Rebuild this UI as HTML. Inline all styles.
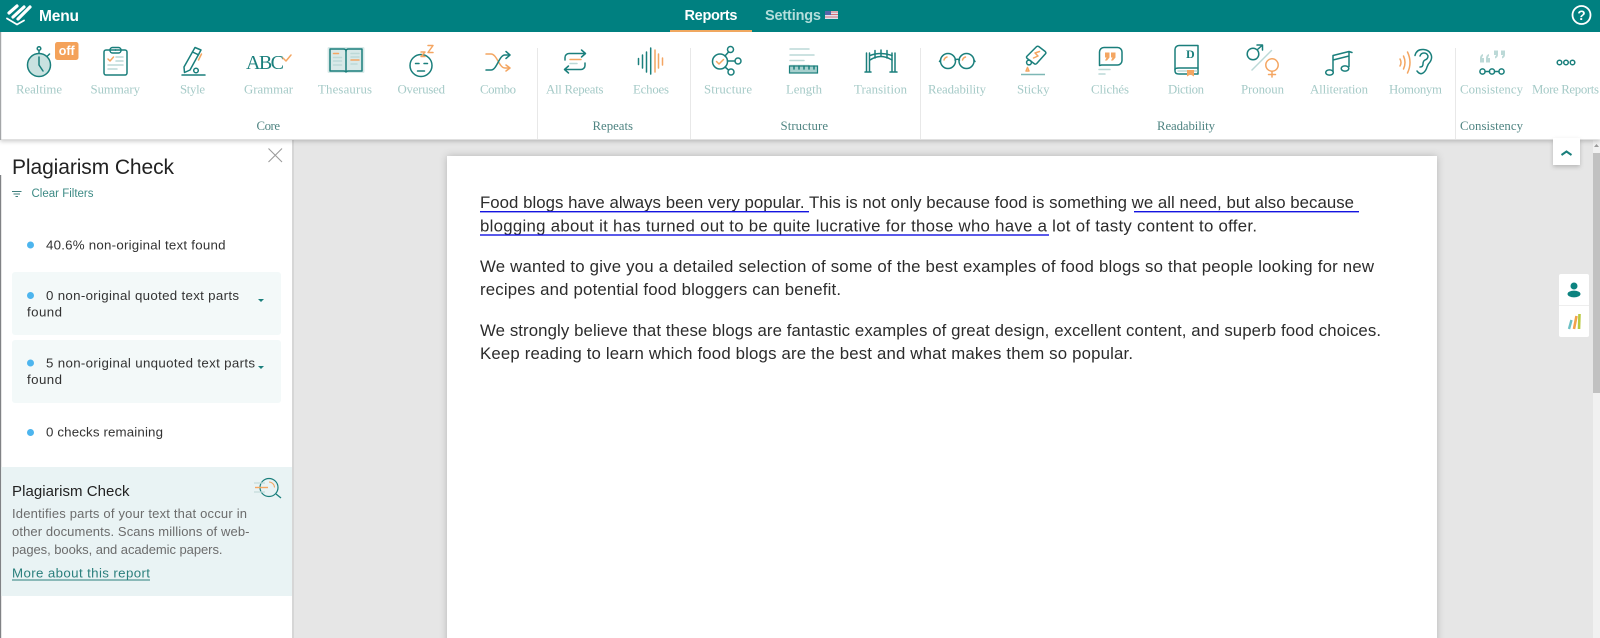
<!DOCTYPE html>
<html><head><meta charset="utf-8"><title>Plagiarism Check</title>
<style>
html,body{margin:0;padding:0;width:1600px;height:638px;overflow:hidden;background:#e6e6e6}
svg{display:block}
.s{font-family:"Liberation Sans",sans-serif}
.l{font-family:"Liberation Serif",serif;font-size:12.8px;fill:#a5cac7}
.g{font-family:"Liberation Serif",serif;font-size:12.8px;fill:#4f8482}
.d{font-family:"Liberation Sans",sans-serif;font-size:16.8px;fill:#2c2c2c}
.b{font-family:"Liberation Sans",sans-serif;font-size:13.3px;fill:#333}
.p{font-family:"Liberation Sans",sans-serif;font-size:13px;fill:#6c6c6c}
.i{fill:none;stroke:#1a7f7c;stroke-width:1.5;stroke-linecap:round;stroke-linejoin:round}
.o{fill:none;stroke:#f4a662;stroke-width:1.5;stroke-linecap:round;stroke-linejoin:round}
.q{fill:none;stroke:#bcd9d7;stroke-width:1.5;stroke-linecap:round}
</style></head><body>
<svg width="1600" height="638" viewBox="0 0 1600 638" xmlns="http://www.w3.org/2000/svg">
<defs>
<filter id="sh" x="-5%" y="-5%" width="110%" height="110%"><feDropShadow dx="0" dy="0" stdDeviation="4" flood-color="#000" flood-opacity=".22"/></filter>
<filter id="sh2" x="-30%" y="-30%" width="160%" height="170%"><feDropShadow dx="0" dy="2" stdDeviation="2" flood-color="#000" flood-opacity=".2"/></filter>
</defs>
<rect width="1600" height="638" fill="#e6e6e6"/>

<!-- paper -->
<rect x="447" y="156" width="990" height="500" fill="#fff" filter="url(#sh)"/>

<!-- scrollbar -->
<rect x="1593" y="140" width="7" height="498" fill="#f1f1f1"/>
<rect x="1593" y="153" width="7" height="240" fill="#c1c1c1"/>
<path d="M1596.5 144l2.5 3h-5z" fill="#9a9a9a"/>

<!-- sidebar -->
<rect x="0" y="140" width="292" height="498" fill="#fff"/>
<rect x="292" y="140" width="2" height="498" fill="#d6d6d6"/>
<rect x="0" y="175" width="1.2" height="463" fill="#808285"/>
<text class="s" x="12" y="174" font-size="21" fill="#222" textLength="162">Plagiarism Check</text>
<path d="M268.500 148.500l13.500 13.500M282 148.500l-13.500 13.500" stroke="#9c9c9c" stroke-width="1.100" fill="none"/>
<path d="M12 191.500h9.500M13.500 194h6.500M15.500 196.500h2.500" stroke="#3f7f7d" stroke-width="1" fill="none"/>
<text class="s" x="31.500" y="197" font-size="11.500" fill="#3d8a85" textLength="62">Clear Filters</text>

<circle cx="30.500" cy="245" r="3.500" fill="#4db5ee"/>
<text class="b" x="46" y="249.500" textLength="179.500">40.6% non-original text found</text>

<rect x="12" y="272" width="269" height="63" rx="3" fill="#f3f9f9"/>
<circle cx="30.500" cy="295.500" r="3.500" fill="#4db5ee"/>
<text class="b" x="46" y="300" textLength="193">0 non-original quoted text parts</text>
<text class="b" x="27" y="316.500" textLength="35">found</text>
<path d="M258 299h6l-3 3z" fill="#1a7f7c"/>

<rect x="12" y="340" width="269" height="63" rx="3" fill="#f3f9f9"/>
<circle cx="30.500" cy="363" r="3.500" fill="#4db5ee"/>
<text class="b" x="46" y="367.500" textLength="209">5 non-original unquoted text parts</text>
<text class="b" x="27" y="384" textLength="35">found</text>
<path d="M258 366h6l-3 3z" fill="#1a7f7c"/>

<circle cx="30.500" cy="432.500" r="3.500" fill="#4db5ee"/>
<text class="b" x="46" y="436.700" textLength="117">0 checks remaining</text>

<rect x="1.200" y="467" width="290.800" height="129" fill="#e9f3f4"/>
<text class="s" x="12" y="496" font-size="15" fill="#222" textLength="117.500">Plagiarism Check</text>
<text class="p" x="12" y="518" textLength="235">Identifies parts of your text that occur in</text>
<text class="p" x="12" y="536" textLength="237.500">other documents. Scans millions of web-</text>
<text class="p" x="12" y="554" textLength="210.500">pages, books, and academic papers.</text>
<text class="s" x="12" y="577.500" font-size="13.300" fill="#2a7f7c" textLength="138">More about this report</text>
<rect x="12" y="579.500" width="138" height="1" fill="#2a7f7c"/>
<!-- report icon -->
<circle cx="269" cy="487.500" r="9" fill="none" stroke="#1a7f7c" stroke-width="1.200"/>
<path d="M276 494l5 4" stroke="#1a7f7c" stroke-width="1.300" fill="none"/>
<path d="M254 483h11M254 492h11" stroke="#c5dcdb" stroke-width="1.200" fill="none"/>
<path d="M255 487.500h13" stroke="#f4a662" stroke-width="1.400" fill="none"/>
<path d="M269 482a5.500 5.500 0 0 1 5.500 5.500" stroke="#f4a662" stroke-width="1" fill="none"/>

<!-- document text -->
<text class="d" x="480" y="208" textLength="874">Food blogs have always been very popular. This is not only because food is something we all need, but also because</text>
<text class="d" x="480" y="231.500" textLength="777">blogging about it has turned out to be quite lucrative for those who have a lot of tasty content to offer.</text>
<text class="d" x="480" y="272" textLength="894">We wanted to give you a detailed selection of some of the best examples of food blogs so that people looking for new</text>
<text class="d" x="480" y="295" textLength="361">recipes and potential food bloggers can benefit.</text>
<text class="d" x="480" y="336" textLength="901">We strongly believe that these blogs are fantastic examples of great design, excellent content, and superb food choices.</text>
<text class="d" x="480" y="359" textLength="653">Keep reading to learn which food blogs are the best and what makes them so popular.</text>
<rect x="480" y="211" width="329" height="1.400" fill="#1414e0"/>
<rect x="1134" y="211" width="225" height="1.400" fill="#1414e0"/>
<rect x="480" y="234.300" width="569" height="1.400" fill="#1414e0"/>

<!-- toolbar -->
<rect x="0" y="32" width="1600" height="107.500" fill="#fff" filter="url(#sh2)"/>
<rect x="0" y="32" width="1.200" height="108" fill="#a4a6a8"/>
<g fill="#e8e8e8">
<rect x="537" y="48" width="1" height="91"/><rect x="690" y="48" width="1" height="91"/>
<rect x="920" y="48" width="1" height="91"/><rect x="1455" y="48" width="1" height="91"/>
</g>

<!-- collapse & side widgets -->
<rect x="1553" y="138" width="27" height="27" fill="#fff" filter="url(#sh2)"/>
<path d="M1561.500 155l5-3.500 5 3.500" fill="none" stroke="#1a7f7c" stroke-width="2"/>
<rect x="1559" y="274" width="30" height="63" rx="2" fill="#fff"/>
<rect x="1559" y="305" width="30" height="1" fill="#eee"/>
<circle cx="1574" cy="286" r="3.500" fill="#0d8380"/>
<ellipse cx="1574" cy="294" rx="6.500" ry="3.400" fill="#0d8380"/>
<path d="M1569 329l2.500-9" stroke="#6cc0c4" stroke-width="2.400" fill="none"/>
<path d="M1574 329l2.500-13" stroke="#f2a24a" stroke-width="2.600" fill="none"/>
<path d="M1579 329l.5-15" stroke="#b9c93f" stroke-width="2.600" fill="none"/>

<!-- header -->
<rect width="1600" height="32" fill="#008080"/>
<g fill="none" stroke="#fff" stroke-linecap="round">
<path d="M9 13l8-7M13 17l11-10M18 19l12-12" stroke-width="3.200"/>
<path d="M7 18.500l10 6 7-4" stroke-width="1.800"/>
</g>
<text class="s" x="39" y="21" font-size="15.500" font-weight="bold" fill="#fff" textLength="40">Menu</text>
<text class="s" x="684.500" y="20" font-size="14.500" font-weight="bold" fill="#fff" textLength="53">Reports</text>
<text class="s" x="765" y="20" font-size="14.500" font-weight="bold" fill="#b4dedb" textLength="56">Settings</text>
<rect x="825" y="11" width="13" height="8" fill="#dfe3ee"/>
<path d="M825 11h6v4h-6z" fill="#5566a8"/>
<path d="M831 12h7M831 14.500h7M825 17h13" stroke="#d8707a" stroke-width="1" fill="none"/>
<rect x="670" y="30" width="82" height="2" fill="#f0a860"/>
<circle cx="1581.500" cy="15" r="9" fill="none" stroke="#fff" stroke-width="1.800"/>
<text class="s" x="1581.500" y="20" font-size="13.500" font-weight="bold" fill="#fff" text-anchor="middle">?</text>

<!-- labels -->
<text class="l" x="16" y="93.500" textLength="46">Realtime</text>
<text class="l" x="90.500" y="93.500" textLength="49.500">Summary</text>
<text class="l" x="180" y="93.500" textLength="25">Style</text>
<text class="l" x="244" y="93.500" textLength="49">Grammar</text>
<text class="l" x="318" y="93.500" textLength="54">Thesaurus</text>
<text class="l" x="397.500" y="93.500" textLength="47.500">Overused</text>
<text class="l" x="480" y="93.500" textLength="36">Combo</text>
<text class="l" x="546" y="93.500" textLength="57.500">All Repeats</text>
<text class="l" x="633" y="93.500" textLength="36">Echoes</text>
<text class="l" x="704" y="93.500" textLength="48">Structure</text>
<text class="l" x="786" y="93.500" textLength="36">Length</text>
<text class="l" x="854" y="93.500" textLength="53">Transition</text>
<text class="l" x="928" y="93.500" textLength="58">Readability</text>
<text class="l" x="1017" y="93.500" textLength="32.500">Sticky</text>
<text class="l" x="1091" y="93.500" textLength="38">Clichés</text>
<text class="l" x="1168" y="93.500" textLength="36">Diction</text>
<text class="l" x="1241" y="93.500" textLength="43">Pronoun</text>
<text class="l" x="1310" y="93.500" textLength="58">Alliteration</text>
<text class="l" x="1389" y="93.500" textLength="53">Homonym</text>
<text class="l" x="1460" y="93.500" textLength="63">Consistency</text>
<text class="l" x="1532" y="93.500" textLength="67">More Reports</text>
<text class="g" x="256.500" y="130" textLength="23.500">Core</text>
<text class="g" x="592.500" y="130" textLength="40.500">Repeats</text>
<text class="g" x="780.500" y="130" textLength="47.500">Structure</text>
<text class="g" x="1157" y="130" textLength="58">Readability</text>
<text class="g" x="1460" y="130" textLength="63">Consistency</text>

<!-- Realtime -->
<circle cx="39" cy="65" r="11.500" fill="#c9e2e0"/>
<circle cx="39" cy="65" r="11.500" class="i"/>
<path class="i" d="M39 57v8l4 6M39 53v-2.500M47.500 56l2-2"/>
<circle cx="39" cy="48.500" r="1.800" class="i"/>
<rect x="55" y="42" width="23.500" height="18" rx="2.500" fill="#f4a25a"/>
<text class="s" x="66.700" y="55" font-size="12.500" font-weight="bold" fill="#fff" text-anchor="middle">off</text>

<!-- Summary -->
<rect x="104" y="50" width="23" height="25" rx="2" class="i"/>
<rect x="110" y="47.500" width="11" height="5.500" rx="2.500" fill="#fff" class="i"/>
<circle cx="115.500" cy="50" r=".9" fill="#1a7f7c"/>
<path class="o" d="M108 59l2 2 3.500-4" stroke-width="1.800"/>
<path class="q" d="M116 57h7M116 61h7M108 65h15M108 69h9" stroke-width="1.200"/>

<!-- Style -->
<path class="i" d="M195 47.500l6 2.500-11 20-5.500 2.500-.5-5.500z"/>
<path class="i" d="M192.500 52l6 2.800"/>
<path class="o" d="M201.500 54l-3 6" stroke-width="1.300"/>
<circle cx="196" cy="70.500" r="2.300" class="i" stroke-width="1.300"/>
<path class="i" d="M182 75h23"/>

<!-- Grammar -->
<text x="246" y="69" font-family="Liberation Serif,serif" font-size="20" fill="#1a7f7c" textLength="38">ABC</text>
<path class="o" d="M283 58l3 3 5-6"/>

<!-- Thesaurus -->
<rect x="327.500" y="47" width="37" height="26" rx="1.500" fill="#d8e9e8"/>
<path class="i" d="M330 49h13.500q2.500 0 2.500 2 0-2 2.500-2H362v22h-13.500q-2.500 0-2.500 1 0-1-2.500-1H330z" fill="#fff"/>
<path class="i" d="M346 51v20"/>
<path class="o" d="M333.500 53.500h5M351 60h8"/>
<path class="q" d="M333.500 57.500h8M333.500 61h8M333.500 65h8M351 53.500h8M351 57h8M351 64h6" stroke-width="1.100"/>

<!-- Overused -->
<circle cx="421" cy="65.500" r="11" class="i"/>
<path class="i" d="M415.500 63.500h3.500M424 63.500h3.500M417.500 71h7" stroke-width="1.400"/>
<path class="o" d="M421 52h4l-4 4.500h4M428 45.500h5l-5 7h5"/>

<!-- Combo -->
<path class="o" d="M486 54h5c6 0 8 14 14 14h4"/>
<path class="o" d="M506 65l4 3-4 3"/>
<path class="i" d="M486 70h5c6 0 8-15 14-15h4"/>
<path class="i" d="M506 51.500l4 3.500-4 3.500"/>

<!-- All Repeats -->
<path class="i" d="M565 60v-2.500a4 4 0 0 1 4-4h16M581.500 50l4 3.500-4 3.500"/>
<path class="i" d="M585 63v2.500a4 4 0 0 1-4 4h-16M568.500 66l-4 3.500 4 3.500"/>
<path class="o" d="M570 59.500h11" stroke-width="2"/>
<path class="q" d="M570 63.500h7"/>

<!-- Echoes -->
<path class="i" d="M638.500 58.500v6M642.500 55v13M646.500 52v20M650.700 48v26"/>
<path class="o" d="M655 50v22M658.500 54v14M662.500 58v7"/>

<!-- Structure -->
<circle cx="720" cy="61.500" r="7.500" class="i"/>
<path class="o" d="M716.500 61.500l2.500 2.500 4.500-4.500"/>
<circle cx="730.500" cy="49.500" r="3" class="i"/><circle cx="738" cy="61" r="3" class="i"/><circle cx="731" cy="72" r="3" class="i"/>
<path class="i" d="M725 56l3.500-4M727.500 61h7.500M725 67l3.500 3"/>

<!-- Length -->
<path class="q" d="M790 49h19M790 55h24M790 60.500h14M790 65.500h19" stroke-width="2"/>
<rect x="789.500" y="66" width="28" height="7" fill="#a7d0ce" stroke="#1a7f7c" stroke-width="1.200"/>
<path class="i" d="M794 66v3M799 66v3M804 66v3M809 66v3M814 66v3" stroke-width=".9"/>

<!-- Transition -->
<path class="i" d="M865 72h6M890 72h7M866.500 53v19M869.500 53v19M892 53v19M895 53v19" stroke-width="1.300"/>
<path class="i" d="M870 60q10.500-7 22 0M870 55.500q10.500-4 22 0" stroke-width="1.300"/>
<path class="i" d="M875 50.500v7.500M881 50v6M887 50.500v7.500" stroke-width="1.200"/>

<!-- Readability -->
<circle cx="948" cy="61" r="7.500" class="i"/><circle cx="966.500" cy="61" r="7.500" class="i"/>
<path class="i" d="M955 60q2-1.500 4.500 0M940.500 60l-1 1.500M974 60l1 1.500"/>
<path class="o" d="M944 60a4.500 4.500 0 0 1 3-3M962.500 60a4.500 4.500 0 0 1 3-3" stroke-width="1.100"/>

<!-- Sticky -->
<path class="i" d="M1036.700 46.500q1-.5 2 0l6.500 5q1 1 .5 2l-9 10q-1 1-2 .5l-7.500-5.500q-1-1-.5-2z"/>
<circle cx="1029" cy="62.500" r="2.400" class="i" stroke-width="1.200" fill="#fff"/>
<path class="o" d="M1039.500 51.500l-4.500 1.500 3 3-4.500 2" stroke-width="1.800"/>
<path class="o" d="M1027.500 67.500l-1.500 3.500h3z" stroke-width="1.100"/>
<path d="M1021 74.500h24" stroke="#7db7b5" stroke-width="1.500" fill="none"/>

<!-- Cliches -->
<path class="i" d="M1104 47.500h13.500a4.500 4.500 0 0 1 4.500 4.500v8.500a4.500 4.500 0 0 1-4.500 4.500h-16l-2 .5V52a4.500 4.500 0 0 1 4.500-4.500z"/>
<path d="M1105 52.500h4.500v5l-2.500 3h-2l1.500-3h-1.500zM1111 52.500h4.500v5l-2.500 3h-2l1.500-3h-1.500z" fill="#f4a662"/>
<path class="q" d="M1099 69.500h11M1099 74h6"/>

<!-- Diction -->
<path class="i" d="M1175 49.500a4 4 0 0 1 4-4h19v28.500h-19q-4 0-4-3z"/>
<path class="i" d="M1175 69.500q0-1.500 4-1.500h19"/>
<path class="q" d="M1178 71h19"/>
<text x="1186" y="58" font-family="Liberation Serif,serif" font-size="12" font-weight="bold" fill="#1a7f7c">D</text>
<path d="M1187 70h7v6.500l-3.500-2-3.500 2z" fill="#f4a662"/>

<!-- Pronoun -->
<circle cx="1253" cy="54" r="5.800" class="i"/>
<path class="i" d="M1257.500 49.500l4.500-4M1257 45h5.500v5"/>
<path class="q" d="M1252 70l19.500-19.500"/>
<circle cx="1272" cy="65" r="6.200" class="o"/>
<path class="o" d="M1272 71.500v5.500M1268.500 74.500h7"/>

<!-- Alliteration -->
<ellipse cx="1329.500" cy="72.500" rx="3.800" ry="2.600" class="i"/>
<ellipse cx="1345" cy="68.500" rx="3.800" ry="2.600" class="i"/>
<path class="i" d="M1333 71.500V55.500l16-4v15M1333 60l16-4M1349 51.500l3 1"/>

<!-- Homonym -->
<path class="o" d="M1400 59q2 3.500 0 7M1403.500 56q3 6.500 0 13M1407.500 52q5 10.500 0 21"/>
<path class="i" d="M1417 71q3 4 6 2 3-2 4-6 1-3 3-5 2-3 1.500-6-1.500-6-8-6.500-7-.5-8.500 6"/>
<path class="i" d="M1420 56q1-3 4-3 3 0 4 3 0 3-3 4-2 1-2 4 0 3-3 3" stroke-width="1.200"/>

<!-- Consistency -->
<path d="M1480 58.500q0-3.500 3-4.500v2q-1 .5-1 2h2v4.500h-4zM1486 58.500q0-3.500 3-4.500v2q-1 .5-1 2h2v4.500h-4z" fill="#bcd9d7"/>
<path d="M1494 50.500h4v4q0 3-3 4v-2q1-.5 1-1.500h-2zM1501 50.500h4v4q0 3-3 4v-2q1-.5 1-1.500h-2z" fill="#bcd9d7"/>
<circle cx="1482.500" cy="71.500" r="2.600" class="i"/><circle cx="1492" cy="71.500" r="2.600" class="i"/><circle cx="1501.500" cy="71.500" r="2.600" class="i"/>
<path class="i" d="M1485 71.500h4.500M1494.500 71.500h4.500"/>

<!-- More reports -->
<circle cx="1559.500" cy="62.500" r="2.300" class="i" stroke-width="1.100"/><circle cx="1566" cy="62.500" r="2.300" class="i" stroke-width="1.100"/><circle cx="1572.500" cy="62.500" r="2.300" class="i" stroke-width="1.100"/>
</svg>
</body></html>
